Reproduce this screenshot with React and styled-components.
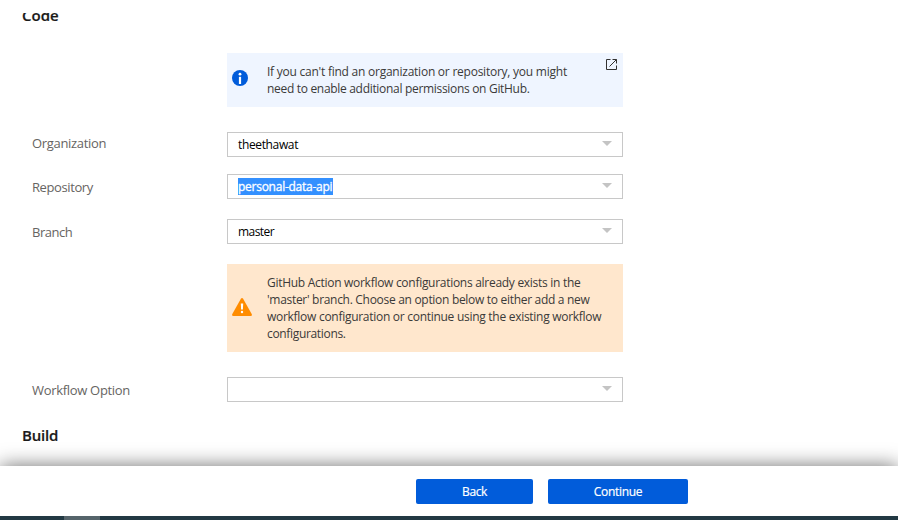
import React from "react";
import styled, { createGlobalStyle } from "styled-components";

const GlobalStyle = createGlobalStyle`
  * { box-sizing: border-box; }
  body {
    margin: 0;
    background: #fff;
    font-family: "Open Sans", "Noto Sans", sans-serif;
    font-size: 12px;
    color: #3b3a39;
  }
`;

const Page = styled.div`
  display: flex;
  flex-direction: column;
  width: 898px;
  height: 520px;
  padding-top: 13px;
  overflow: hidden;
`;

const Scroller = styled.main`
  height: 453px;
  flex: none;
  overflow: hidden;
`;

const Heading = styled.h2`
  margin: ${(p) => p.$margin};
  padding-left: 22px;
  height: 20px;
  line-height: 20px;
  font-size: 15px;
  font-weight: 600;
  color: #1b1a19;
  letter-spacing: ${(p) => p.$track}px;
  -webkit-text-stroke: 0.2px #1b1a19;
`;

const Row = styled.div`
  display: grid;
  grid-template-columns: 195px 396px;
  padding-left: 32px;
  margin-bottom: ${(p) => p.$gap}px;
`;

const Label = styled.label`
  height: 25px;
  line-height: 18px;
  padding-top: ${(p) => p.$top}px;
  font-size: 13px;
  color: #666462;
  letter-spacing: ${(p) => p.$track}px;
`;

const Select = styled.div`
  grid-column: 2;
  display: flex;
  align-items: center;
  justify-content: space-between;
  height: 25px;
  padding: 0 10px;
  border: 1px solid #c8c8c8;
  color: #000;
`;

const Value = styled.span`
  height: 17px;
  line-height: 17px;
  letter-spacing: ${(p) => p.$track}px;
  margin-top: -1px;
  ${(p) => p.$selected && "background: #3390ff; color: #fff; -webkit-text-stroke: 0.3px #fff; padding-right: 1px;"}
`;

const Arrow = styled.span`
  width: 10px;
  height: 5px;
  margin-top: -2px;
  background: #c4c4c4;
  clip-path: polygon(0 0, 100% 0, 50% 100%);
`;

const Notice = styled.div`
  grid-column: 2;
  display: flex;
  height: ${(p) => p.$height}px;
  padding: 10px 6px 0 5px;
  background: ${(p) => p.$background};
`;

const IconSlot = styled.span`
  display: block;
  width: 35px;
  flex: none;
  padding-top: ${(p) => p.$top}px;
  svg { display: block; }
`;

const Message = styled.div`
  flex: 1;
  line-height: 17px;
  white-space: nowrap;
`;

const Line = styled.div`
  letter-spacing: ${(p) => p.$track}px;
`;

const ExternalLink = styled.a`
  display: block;
  height: 11px;
  margin-top: -4px;
  svg { display: block; }
`;

const Footer = styled.footer`
  position: relative;
  flex: none;
  display: flex;
  gap: 15px;
  height: 50px;
  padding: 13px 0 0 416px;
  background: #fff;
  box-shadow: 0 0 20px rgba(0, 0, 0, 0.57);
`;

const Button = styled.button`
  width: ${(p) => p.$width}px;
  height: 25px;
  padding: 0;
  border: 0;
  border-radius: 2px;
  background: #015cda;
  color: #fff;
  font: inherit;
  line-height: 25px;
  letter-spacing: ${(p) => p.$track}px;
  -webkit-text-stroke: 0.2px #fff;
`;

const Taskbar = styled.div`
  position: relative;
  flex: none;
  height: 4px;
  padding-left: 64px;
  background: #223943;
`;

const TaskItem = styled.div`
  width: 36px;
  height: 4px;
  background: #55646b;
`;

const InfoIcon = () => (
  <svg width="16" height="16" viewBox="0 0 16 16">
    <circle cx="8" cy="8" r="8" fill="#015cda" />
    <circle cx="8" cy="4.2" r="1.4" fill="#fff" />
    <path d="M6.900 6.800h2.200V14H6.900z" fill="#fff" />
  </svg>
);

const WarningIcon = () => (
  <svg width="20" height="18" viewBox="0 0 20 18">
    <path d="M9 .6Q10-.6 11 .6L19.8 16.3Q20.3 18 18.7 18H1.3Q-.3 18 .2 16.3Z" fill="#ff8c00" />
    <path d="M8.800 5.500h2.400l-.3 6H9.100z" fill="#fff" />
    <circle cx="10" cy="14" r="1.2" fill="#fff" />
  </svg>
);

const ExternalIcon = () => (
  <svg width="11" height="11" viewBox="0 0 11 11" fill="none" stroke="#323130">
    <path d="M4.500 .5H.5v10h10V6.500M6.500 .5h4v4M10.500.5L3.500 7.500" />
  </svg>
);

const Field = ({ label, labelTop, labelTrack, value, track, selected, gap }) => (
  <Row $gap={gap}>
    <Label $top={labelTop} $track={labelTrack}>{label}</Label>
    <Select>
      <Value $track={track} $selected={selected}>{value}</Value>
      <Arrow />
    </Select>
  </Row>
);

export default function App() {
  return (
    <>
      <GlobalStyle />
      <Page>
        <Scroller>
          <Heading $margin="-8px 0 28px" $track={0}>Code</Heading>
          <Row $gap={25}>
            <Notice $height={54} $background="#eff5ff">
              <IconSlot $top={7}><InfoIcon /></IconSlot>
              <Message>
                <Line $track={-0.24}>If you can't find an organization or repository, you might</Line>
                <Line $track={-0.31}>need to enable additional permissions on GitHub.</Line>
              </Message>
              <ExternalLink><ExternalIcon /></ExternalLink>
            </Notice>
          </Row>
          <Field label="Organization" labelTop={2} labelTrack={-0.33} value="theethawat" track={-0.36} gap={17} />
          <Field label="Repository" labelTop={4} labelTrack={-0.4} value="personal-data-api" track={-0.26} selected gap={20} />
          <Field label="Branch" labelTop={4} labelTrack={-0.5} value="master" track={-0.55} gap={20} />
          <Row $gap={25}>
            <Notice $height={88} $background="#ffe7cd">
              <IconSlot $top={24}><WarningIcon /></IconSlot>
              <Message>
                <Line $track={-0.285}>GitHub Action workflow configurations already exists in the</Line>
                <Line $track={-0.3}>'master' branch. Choose an option below to either add a new</Line>
                <Line $track={-0.28}>workflow configuration or continue using the existing workflow</Line>
                <Line $track={-0.33}>configurations.</Line>
              </Message>
            </Notice>
          </Row>
          <Field label="Workflow Option" labelTop={4} labelTrack={-0.31} value="" gap={23} />
          <Heading $margin="0" $track={-0.2}>Build</Heading>
        </Scroller>
        <Footer>
          <Button $width={117} $track={-0.4}>Back</Button>
          <Button $width={140} $track={-0.3}>Continue</Button>
        </Footer>
        <Taskbar><TaskItem /></Taskbar>
      </Page>
    </>
  );
}
